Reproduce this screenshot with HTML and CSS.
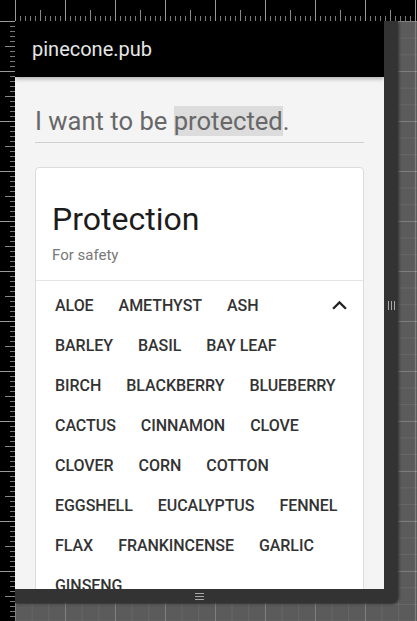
FILE: index.html
```html
<!DOCTYPE html>
<html lang="en">
<head>
<meta charset="utf-8">
<title>pinecone.pub</title>
<link rel="stylesheet" href="styles.css">
</head>
<body>
<div class="devtools">
  <div class="corner"></div>
  <div class="ruler ruler-top"></div>
  <div class="ruler ruler-left"></div>
  <div class="canvas">
    <div class="device">
      <div class="viewport">
        <header class="appbar"><span class="brand">pinecone.pub</span></header>
        <main class="page">
          <h1 class="intent">I want to be <mark class="hl">protected</mark>.</h1>
          <section class="card">
            <div class="card-head">
              <h2 class="card-title">Protection</h2>
              <p class="card-sub">For safety</p>
            </div>
            <div class="card-body">
              <div class="chips">
                <div class="chip-row"><span class="chip">Aloe</span><span class="chip">Amethyst</span><span class="chip">Ash</span></div>
                <div class="chip-row"><span class="chip">Barley</span><span class="chip">Basil</span><span class="chip">Bay leaf</span></div>
                <div class="chip-row"><span class="chip">Birch</span><span class="chip">Blackberry</span><span class="chip">Blueberry</span></div>
                <div class="chip-row"><span class="chip">Cactus</span><span class="chip">Cinnamon</span><span class="chip">Clove</span></div>
                <div class="chip-row"><span class="chip">Clover</span><span class="chip">Corn</span><span class="chip">Cotton</span></div>
                <div class="chip-row"><span class="chip">Eggshell</span><span class="chip">Eucalyptus</span><span class="chip">Fennel</span></div>
                <div class="chip-row"><span class="chip">Flax</span><span class="chip">Frankincense</span><span class="chip">Garlic</span></div>
                <div class="chip-row"><span class="chip">Ginseng</span></div>
              </div>
              <button class="toggle" aria-label="Collapse">
                <svg viewBox="0 0 24 24" width="29" height="29"><path d="M12 8l-6 6 1.41 1.41L12 10.83l4.59 4.58L18 14z" fill="#222"/></svg>
              </button>
            </div>
          </section>
        </main>
      </div>
      <div class="handle handle-right"><i></i><i></i><i></i></div>
      <div class="handle handle-bottom"><i></i><i></i><i></i></div>
      <div class="handle-corner"></div>
    </div>
  </div>
</div>
</body>
</html>
```

FILE: styles.css
```css
html, body {
  margin: 0;
  padding: 0;
}
body {
  width: 417px;
  height: 621px;
  overflow: hidden;
  background: #000;
  font-family: Roboto, "Liberation Sans", sans-serif;
}
.devtools {
  display: grid;
  grid-template-columns: 15px 402px;
  grid-template-rows: 21px 600px;
  width: 417px;
  height: 621px;
}
.corner {
  background: #000;
  border-right: 1px solid #9a9a9a;
  border-bottom: 1px solid #9a9a9a;
  box-sizing: border-box;
  width: 16px;
  height: 22px;
}
.ruler {
  background-color: #000;
}
.ruler-top {
  background-image:
    linear-gradient(to right, #9a9a9a 1px, transparent 1px),
    linear-gradient(to right, #8a8a8a 1px, transparent 1px),
    linear-gradient(to right, #7a7a7a 1px, transparent 1px);
  background-size: 50px 21px, 50px 11px, 5px 5px;
  background-position: 0 0, 25px 100%, 0 100%;
  background-repeat: repeat-x;
}
.ruler-left {
  background-image:
    linear-gradient(to bottom, #9a9a9a 1px, transparent 1px),
    linear-gradient(to bottom, #8a8a8a 1px, transparent 1px),
    linear-gradient(to bottom, #7a7a7a 1px, transparent 1px);
  background-size: 15px 50px, 10px 50px, 5px 5px;
  background-position: 0 0, 100% 25px, 100% 0;
  background-repeat: repeat-y;
}
.canvas {
  background-color: #5b5b5b;
  background-image:
    linear-gradient(to right, rgba(255,255,255,.16) 1px, transparent 1px),
    linear-gradient(to bottom, rgba(255,255,255,.16) 1px, transparent 1px),
    linear-gradient(to right, rgba(255,255,255,.07) 1px, transparent 1px),
    linear-gradient(to bottom, rgba(255,255,255,.07) 1px, transparent 1px);
  background-size: 50px 50px, 50px 50px, 16.667px 16.667px, 16.667px 16.667px;
  overflow: hidden;
}
.device {
  display: grid;
  grid-template-columns: 369px 14px;
  grid-template-rows: 568px 14px;
  width: 383px;
  height: 582px;
  background: #333;
  border-radius: 0 0 7px 0;
  box-shadow: 1px 1px 3px rgba(0,0,0,.55);
}
.viewport {
  overflow: hidden;
  background: #f4f4f4;
}
.handle {
  display: flex;
  justify-content: center;
  align-items: center;
  gap: 2px;
}
.handle i {
  display: block;
  background: #a8a8a8;
}
.handle-right i {
  width: 1px;
  height: 9px;
}
.handle-bottom {
  flex-direction: column;
}
.handle-bottom i {
  width: 9px;
  height: 1px;
}
.handle-corner {
  border-radius: 0 0 7px 0;
}

/* app */
.appbar {
  position: relative;
  z-index: 1;
  height: 56px;
  background: #000;
  padding-left: 17px;
  box-shadow: 0 2px 4px rgba(0,0,0,.28);
}
.brand {
  display: block;
  font-size: 20px;
  line-height: 56px;
  color: #e6e6e6;
}
.page {
  padding: 0 20px;
}
.intent {
  margin: 26px 0 0;
  padding-bottom: 3px;
  border-bottom: 1px solid #cfcfcf;
  font-size: 25.6px;
  line-height: 36px;
  font-weight: 400;
  color: #686868;
}
.hl {
  background: #dcdcdc;
  color: inherit;
}
.card {
  margin-top: 24px;
  background: #fff;
  border: 1px solid #dcdcdc;
  border-radius: 4px;
}
.card-head {
  padding: 31px 16px 15px;
  border-bottom: 1px solid #e4e4e4;
}
.card-title {
  margin: 0;
  font-size: 32px;
  line-height: 40px;
  font-weight: 400;
  color: #1c1c1c;
}
.card-sub {
  margin: 6px 0 0;
  font-size: 15px;
  line-height: 20px;
  color: #777;
}
.card-body {
  position: relative;
  padding: 5px 10px 0 19px;
}
.chips {
  display: flex;
  flex-direction: column;
}
.chip-row {
  display: flex;
  column-gap: 25px;
}
.chip {
  font-size: 16px;
  line-height: 40px;
  font-weight: 500;
  text-transform: uppercase;
  letter-spacing: -0.05px;
  color: #333;
  white-space: nowrap;
}
.toggle {
  position: absolute;
  top: 10px;
  right: 9px;
  padding: 0;
  border: 0;
  background: none;
  width: 29px;
  height: 29px;
}
.toggle svg {
  display: block;
}
```
